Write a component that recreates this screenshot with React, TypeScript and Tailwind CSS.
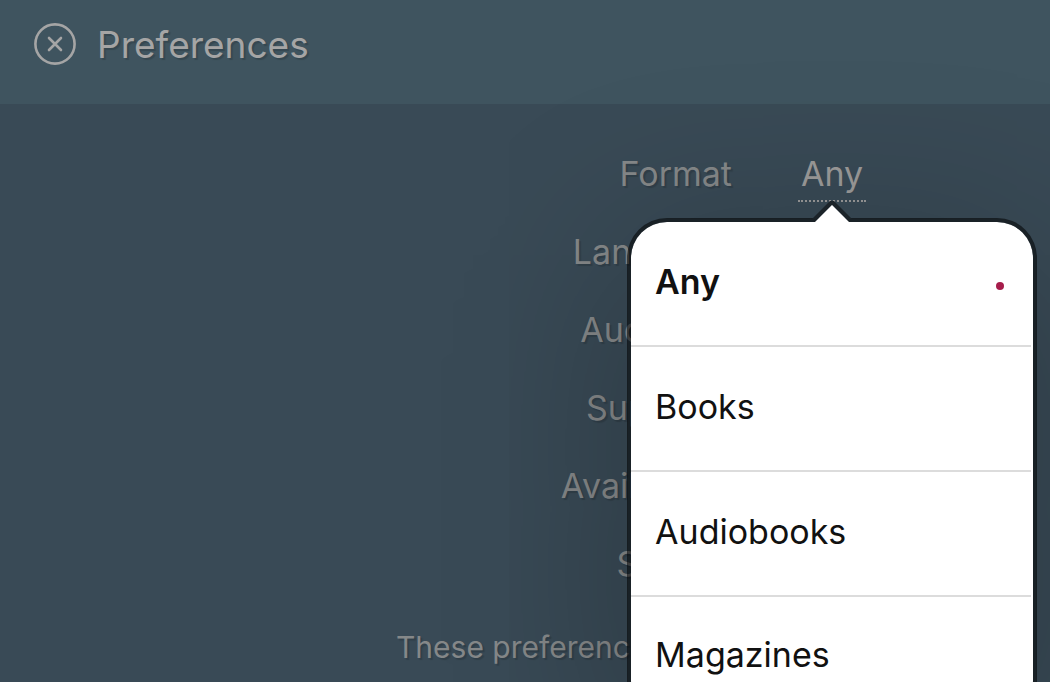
import React, { useState } from 'react';

const preferences = [
  { label: 'Language', value: 'Any' },
  { label: 'Audience', value: 'Any' },
  { label: 'Supports', value: 'Any' },
  { label: 'Availability', value: 'Any' },
  { label: 'Sort by', value: 'Any' },
];

const formats = ['Any', 'Books', 'Audiobooks', 'Magazines'];

function CloseIcon() {
  return (
    <svg viewBox="0 0 42 42" className="size-[42px]" fill="none" stroke="currentColor">
      <circle cx="21" cy="21" r="19.6" strokeWidth="2.6" />
      <path d="M15 15 27 27M27 15 15 27" strokeWidth="2.6" strokeLinecap="round" />
    </svg>
  );
}

function FormatMenu({
  selected,
  onSelect,
}: {
  selected: string;
  onSelect: (format: string) => void;
}) {
  return (
    <div className="absolute top-full left-1/2 mt-4 w-[410px] -translate-x-1/2 rounded-[40px] border-4 border-black/55 bg-white bg-clip-padding text-[#111] shadow-[0_40px_180px_10px_rgba(0,0,0,0.26)]">
      <svg
        viewBox="0 0 44 22"
        className="absolute -top-[21px] left-1/2 h-[22px] w-11 -translate-x-1/2"
      >
        <path d="M2 18 20 0H24L42 18H36L22 4 8 18Z" fill="#1b2329" />
        <path d="M4 22 22 4 40 22Z" fill="white" />
      </svg>
      <ul className="pr-[2px]">
        {formats.map((format) => (
          <li
            key={format}
            className="h-[125px] border-b-2 border-[#dcdcdc] last:h-[119px] last:border-b-0"
          >
            <button
              type="button"
              className={`flex h-full w-full items-center justify-between pr-[27px] pb-1 pl-6 text-left text-[34px] ${
                format === selected ? 'font-semibold' : ''
              }`}
              onClick={() => onSelect(format)}
            >
              {format}
              {format === selected && <span className="mt-2 size-2 rounded-full bg-[#a61d4b]" />}
            </button>
          </li>
        ))}
      </ul>
    </div>
  );
}

export default function App() {
  const [format, setFormat] = useState('Any');

  return (
    <div className="flex h-screen flex-col overflow-hidden bg-[#394a56] font-['Inter',sans-serif] text-[#858889] [text-shadow:2px_2px_1px_rgba(0,0,0,0.15)]">
      <header className="flex h-[104px] shrink-0 items-start gap-[21px] bg-[#3f545f] px-[34px] pt-5 text-[#a5a5a5]">
        <button type="button" aria-label="Close" className="mt-[3px]">
          <CloseIcon />
        </button>
        <h1 className="text-[37px] leading-[50px]">Preferences</h1>
      </header>
      <main className="pt-8 text-[34px]">
        <dl>
          <div className="relative z-10 grid h-[78px] grid-cols-[7fr_3fr] items-start">
            <dt className="pr-[3px] text-right leading-[76px]">Format</dt>
            <dd className="pt-3 pl-[63px]">
              <div className="relative inline-block">
                <button
                  type="button"
                  className="block h-[54px] border-b-2 border-dotted border-[#9a9a9a] px-[3px] pb-[2px] text-[#9c9b9a]"
                >
                  {format}
                </button>
                <div className="[text-shadow:none]">
                  <FormatMenu selected={format} onSelect={setFormat} />
                </div>
              </div>
            </dd>
          </div>
          {preferences.map(({ label, value }) => (
            <div key={label} className="grid h-[78px] grid-cols-[7fr_3fr] items-start">
              <dt className="pr-[3px] text-right leading-[76px]">{label}</dt>
              <dd className="pt-3 pl-[63px]">
                <button
                  type="button"
                  className="block h-[54px] border-b-2 border-dotted border-[#9a9a9a] px-[3px] pb-[2px] text-[#9c9b9a]"
                >
                  {value}
                </button>
              </dd>
            </div>
          ))}
        </dl>
        <p className="pt-5 pl-[396px] text-[30px] leading-[46px] whitespace-nowrap">
          These preferences will be applied across all
        </p>
      </main>
    </div>
  );
}
